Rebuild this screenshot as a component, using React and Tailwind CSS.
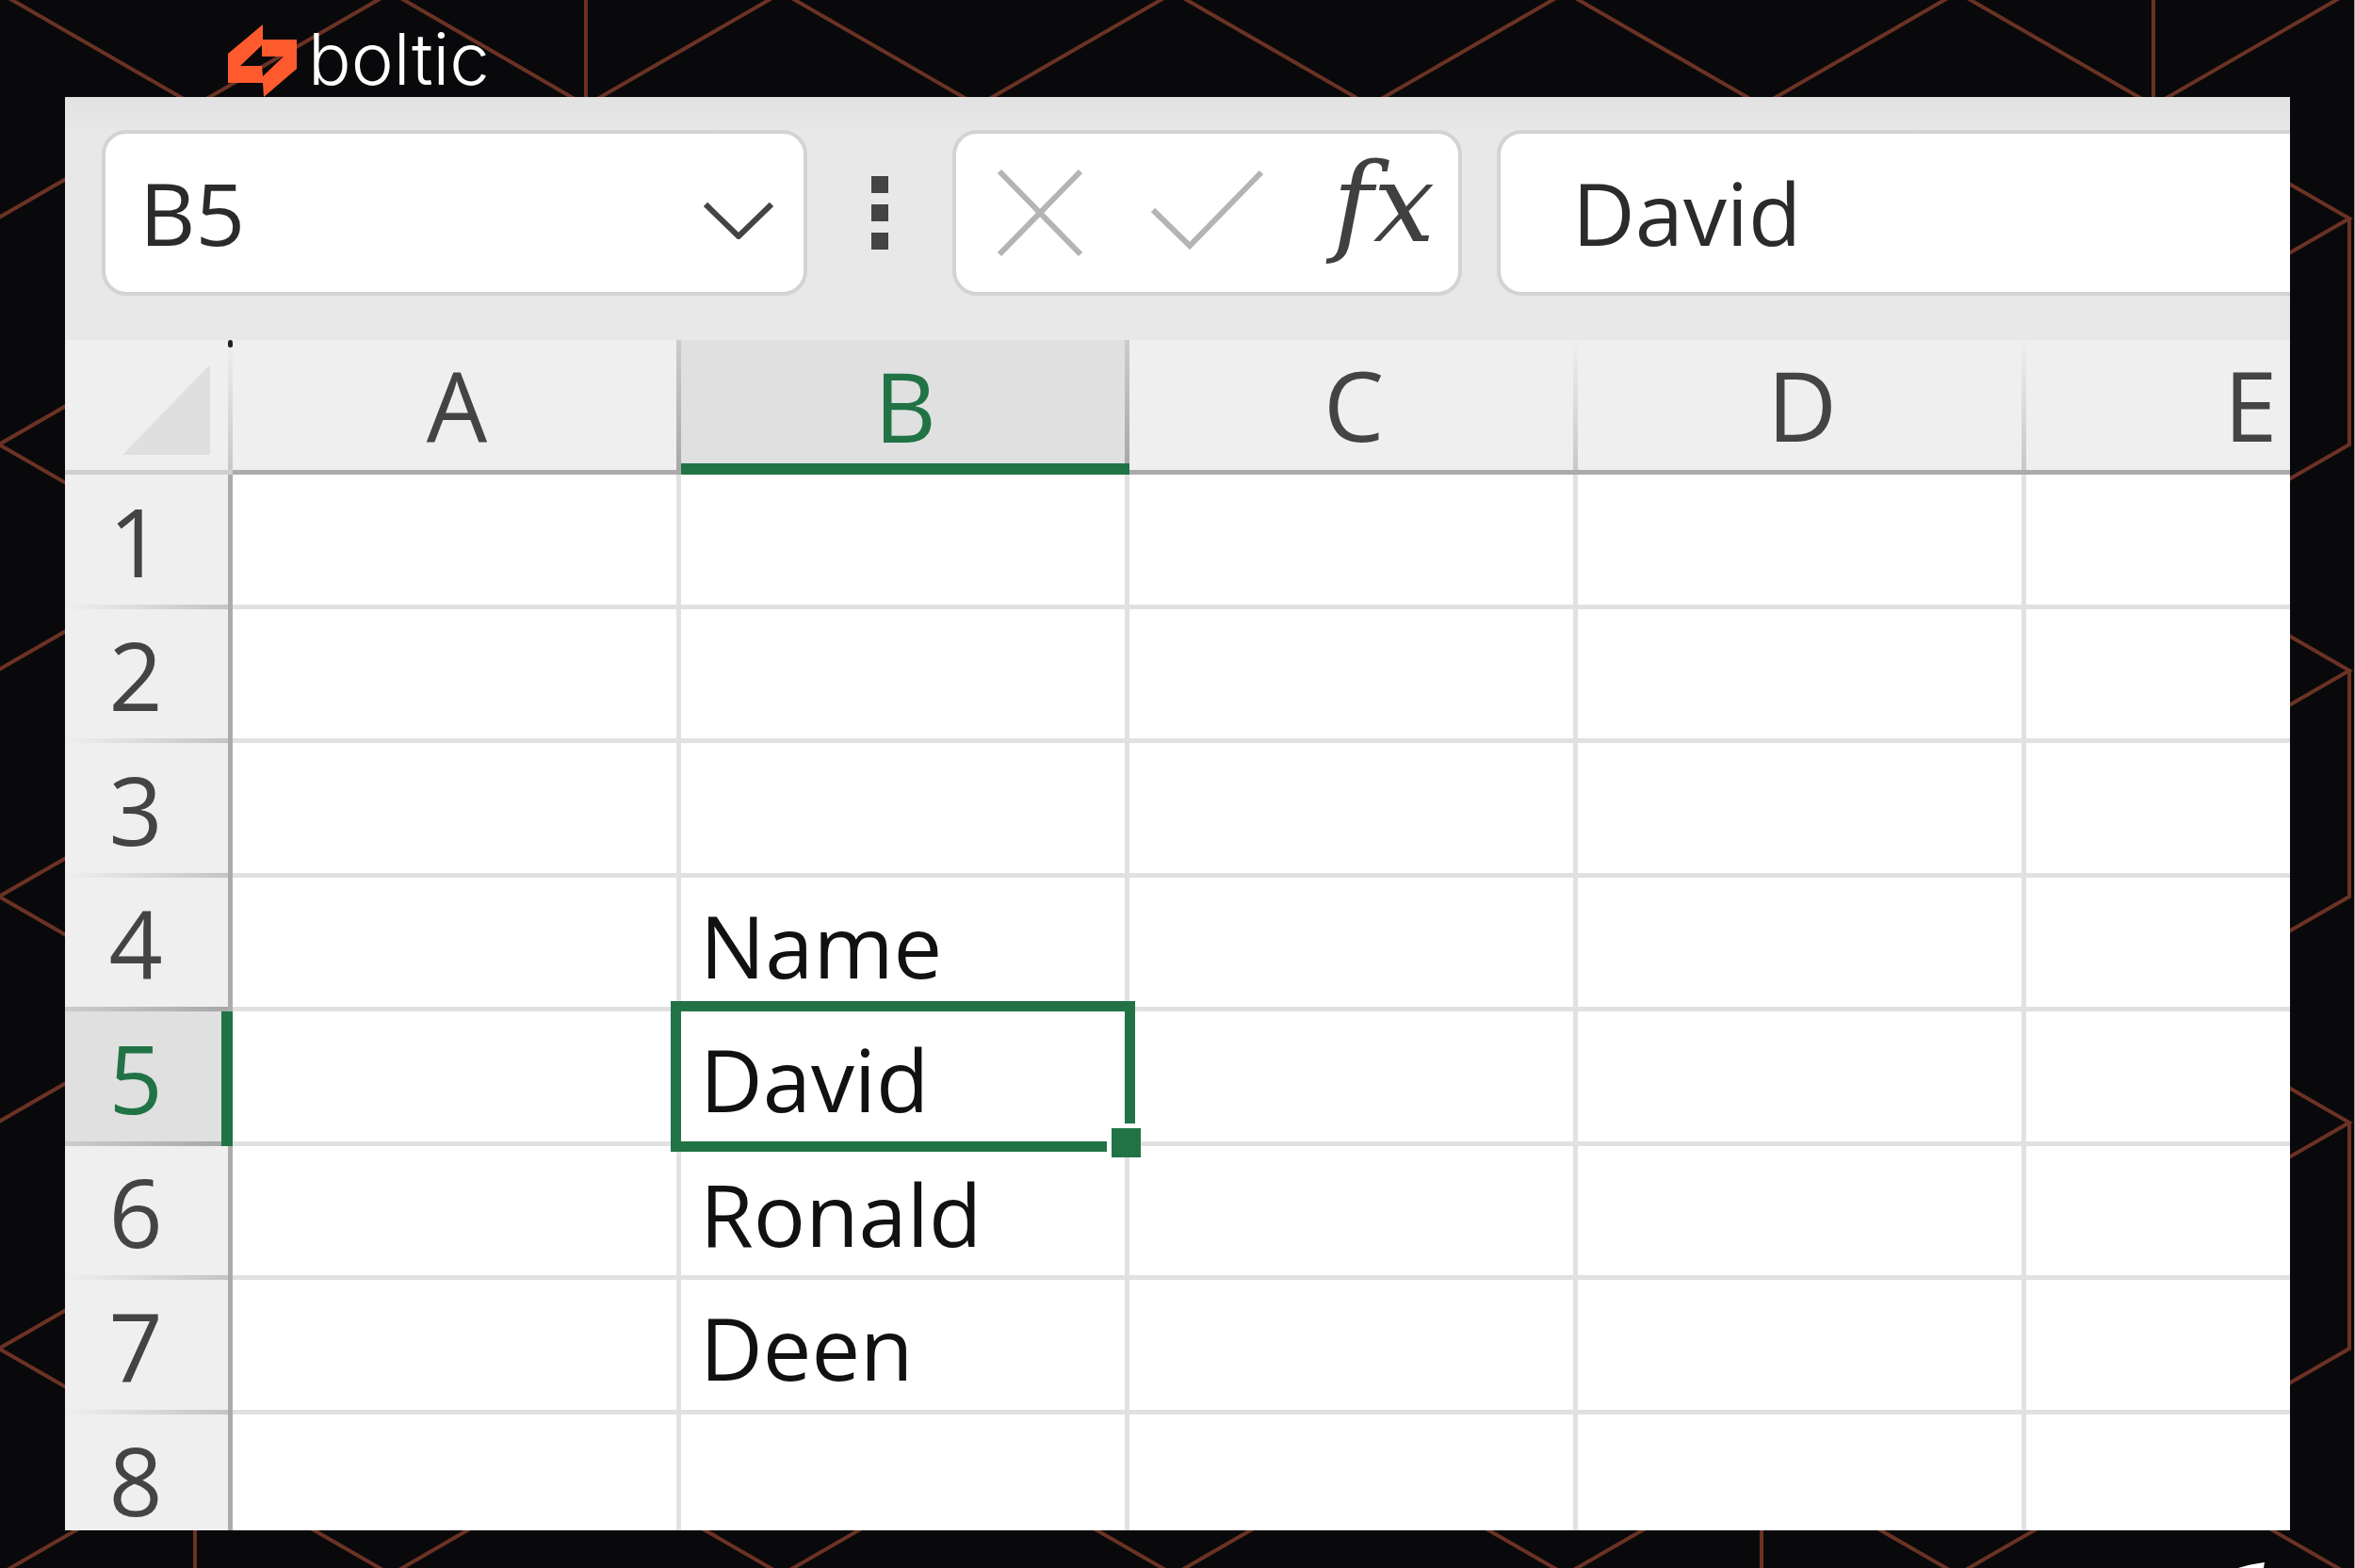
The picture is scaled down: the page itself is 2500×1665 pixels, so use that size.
import React from 'react';

const columns = ['A', 'B', 'C', 'D', 'E'];

const rows = [
    { id: 1 },
    { id: 2 },
    { id: 3 },
    { id: 4, B: 'Name' },
    { id: 5, B: 'David' },
    { id: 6, B: 'Ronald' },
    { id: 7, B: 'Deen' },
    { id: 8 },
];

const active = { col: 'B', row: 5 };

const Backdrop = () => (
    <svg
        className="absolute inset-0 h-full w-full"
        viewBox="0 0 2500 1665"
        preserveAspectRatio="none"
        fill="none"
        stroke="#6b3224"
        strokeWidth="4"
        aria-hidden="true"
    >
        {/* top and bottom edges */}
        <path d="M-1-8 207 112 415-8 622 112 830-8 1038 112 1246-8 1454 112 1662-8 1870 112 2078-8 2286 112 2494-8" />
        <path d="M-1 1672 207 1552 415 1672 622 1552 830 1672 1038 1552 1246 1672 1454 1552 1662 1672 1870 1552 2078 1672 2286 1552 2494 1672" />
        <path d="M622-8V112M2286-8V112M207 1552V1672M1870 1552V1672" />
        {/* left edge */}
        <path d="M-1 231 207 111M-1 711 207 591M-1 1191 207 1071" />
        <path d="M207 352-1 472 207 592M207 832-1 952 207 1072M207 1312-1 1432 207 1552" />
        {/* right edge */}
        <path d="M2286 112 2494 232 2286 352M2286 592 2494 712 2286 832M2286 1072 2494 1192 2286 1312" />
        <path d="M2494 232V472L2286 592M2494 712V952L2286 1072M2494 1192V1432L2286 1552" />
        <path d="M2499.500 0V1665" stroke="#a9a9a9" strokeWidth="1" />
        <path d="M2376 1665Q2388 1661 2404 1659L2403 1665Z" fill="#ffffff" stroke="none" />
    </svg>
);

const Logo = () => (
    <a href="#" className="flex items-start gap-3 text-white">
        <svg className="h-[77px] w-[73px]" viewBox="0 0 73 77" fill="#ff5a2d" fillRule="evenodd" aria-hidden="true">
            <path d="M37 0V16H73V47L38 77 37 62H0V31ZM36 22 13 44H36L37 55 59 34H36Z" />
        </svg>
        <span className="font-['Inter',sans-serif] text-[76px] leading-[72px] font-light">boltic</span>
    </a>
);

const Toolbar = () => (
    <div className="flex items-center bg-[#e8e8e8] bg-linear-to-b from-[#e2e2e2] to-[#e8e8e8] to-15% pt-[35px] pb-[47px] pl-[39px] text-[92px] text-[#2b2b2b]">
        <div className="flex h-[176px] w-[749px] shrink-0 items-center rounded-[26px] border-4 border-[#d3d3d3] bg-white pr-8 pl-9">
            <input aria-label="Name box" defaultValue="B5" className="min-w-0 flex-1 bg-transparent outline-none" />
            <button type="button" aria-label="Show names">
                <svg className="mt-4 h-10 w-[74px]" viewBox="0 0 74 40" fill="none" stroke="#444" strokeWidth="6">
                    <path d="M2 3 37 37 72 3" />
                </svg>
            </button>
        </div>

        <div className="mx-[68px] flex shrink-0 flex-col gap-3">
            {[1, 2, 3].map((i) => (
                <span key={i} className="size-[18px] bg-[#444]"></span>
            ))}
        </div>

        <div className="flex h-[176px] w-[541px] shrink-0 items-center rounded-[26px] border-4 border-[#d3d3d3] bg-white pl-[43px]">
            <button type="button" aria-label="Cancel">
                <svg className="h-[94px] w-[92px]" viewBox="0 0 92 94" fill="none" stroke="#b4b4b4" strokeWidth="6">
                    <path d="M3 3 89 91M89 3 3 91" />
                </svg>
            </button>
            <button type="button" aria-label="Enter" className="ml-[72px]">
                <svg className="h-[94px] w-[120px]" viewBox="0 0 120 94" fill="none" stroke="#b4b4b4" strokeWidth="6">
                    <path d="M2 44 41 82 117 4" />
                </svg>
            </button>
            <button
                type="button"
                aria-label="Insert function"
                className="flex-1 pb-5 pl-12 font-['DejaVu_Serif',serif] text-[116px] leading-none text-[#404040] italic"
            >
                fx
            </button>
        </div>

        <div className="ml-[37px] flex h-[176px] min-w-0 flex-1 items-center rounded-l-[26px] border-4 border-r-0 border-[#d3d3d3] bg-white pl-[76px]">
            <input aria-label="Formula bar" defaultValue="David" className="min-w-0 flex-1 bg-transparent outline-none" />
        </div>
    </div>
);

const ColumnHead = ({ name }) => {
    if (name === active.col) {
        return (
            <th
                scope="col"
                className="border-b-12 border-[#217346] bg-[#e0e0e0] bg-linear-to-b from-[#cccccc] to-[#a8a8a8] bg-[length:5px_100%] bg-right bg-no-repeat pt-2 font-normal text-[#217346]"
            >
                {name}
            </th>
        );
    }

    return (
        <th
            scope="col"
            className={`border-b-5 border-[#ababab] bg-linear-to-b bg-[length:5px_100%] bg-right bg-no-repeat font-normal ${
                name === 'A' ? 'from-[#cccccc] to-[#a8a8a8]' : 'from-[#efefef] to-[#c8c8c8]'
            }`}
        >
            {name}
        </th>
    );
};

const RowHead = ({ id }) => {
    let look = 'border-r-5 border-[#ababab] bg-[#efefef] from-[#efefef] to-[#c4c4c4] text-[#444]';
    if (id === active.row) {
        look = 'border-r-12 border-[#217346] bg-[#e0e0e0] from-[#cccccc] to-[#a8a8a8] text-[#217346]';
    } else if (id === active.row - 1) {
        look = 'border-r-5 border-[#ababab] bg-[#efefef] from-[#cccccc] to-[#a8a8a8] text-[#444]';
    }

    return (
        <th
            scope="row"
            className={`bg-linear-to-r bg-[length:100%_5px] bg-bottom bg-no-repeat pb-1 pl-[22px] text-left text-[100px] font-normal ${look}`}
        >
            <span className="block w-[106px] text-center">{id}</span>
        </th>
    );
};

const Cell = ({ col, row }) => {
    const selected = col === active.col && row.id === active.row;

    return (
        <td className={`border-r-5 border-b-5 border-[#e1e1e1] pt-1.5 pl-5 ${selected ? 'relative' : ''}`}>
            {row[col]}
            {selected && (
                <>
                    <span className="absolute -inset-[11px] border-11 border-[#217346]"></span>
                    <span className="absolute -right-[17px] -bottom-[17px] size-9 border-t-5 border-l-5 border-white bg-[#217346]"></span>
                </>
            )}
        </td>
    );
};

const Sheet = () => (
    <table className="w-max table-fixed border-separate border-spacing-0 leading-none">
        <colgroup>
            <col className="w-[178px]" />
            {columns.map((c) => (
                <col key={c} className="w-[476px]" />
            ))}
        </colgroup>
        <thead className="bg-[#efefef] text-[102px] text-[#444]">
            <tr className="h-[143px]">
                <td className="relative border-b-5 border-[#cfcfcf] bg-linear-to-b from-[#efefef] to-[#c8c8c8] bg-[length:5px_100%] bg-right bg-no-repeat pr-6 align-bottom">
                    <button type="button" aria-label="Select all" className="mb-4 ml-auto block">
                        <svg className="h-24 w-[93px]" viewBox="0 0 93 96" fill="#dfdfdf">
                            <path d="M93 0V96H0Z" />
                        </svg>
                    </button>
                    <span className="absolute top-0 right-0 h-2 w-[5px] rounded-sm bg-[#222]"></span>
                </td>
                {columns.map((c) => (
                    <ColumnHead key={c} name={c} />
                ))}
            </tr>
        </thead>
        <tbody className="text-[92px] text-[#111]">
            {rows.map((row) => (
                <tr key={row.id} className="odd:h-[143px] even:h-[142px]">
                    <RowHead id={row.id} />
                    {columns.map((c) => (
                        <Cell key={c} col={c} row={row} />
                    ))}
                </tr>
            ))}
        </tbody>
    </table>
);

const App = () => (
    <div className="relative flex h-screen flex-col overflow-hidden bg-[#09090b] px-[69px] pb-10 font-['Open_Sans','Noto_Sans',sans-serif]">
        <Backdrop />
        <header className="relative flex h-[103px] shrink-0 items-end pl-[173px]">
            <Logo />
        </header>
        <main className="relative min-h-0 flex-1 overflow-hidden bg-white">
            <Toolbar />
            <Sheet />
        </main>
    </div>
);

export default App;
